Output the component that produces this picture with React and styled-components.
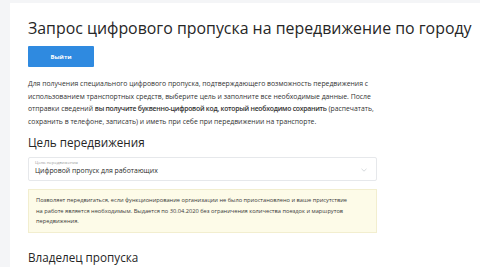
import React from "react";
import styled, { createGlobalStyle } from "styled-components";

const Global = createGlobalStyle`
  html, body { margin: 0; padding: 0; background: #f4f5f7; }
  body { font-family: "Open Sans", "Noto Sans", sans-serif; color: #2b2b2b; overflow: hidden; }
`;

const Page = styled.div`
  padding: 3px 0 0 10px;
  height: 264px;
  overflow: hidden;
`;

const Card = styled.div`
  background: #fff;
  padding: 13px 0 20px 18px;
  min-height: 300px;
`;

const Title = styled.h1`
  margin: 0;
  font-size: 15.9px;
  font-weight: 500;
  line-height: 24px;
  color: #262626;
  white-space: nowrap;
`;

const Button = styled.button`
  display: block;
  margin-top: 6px;
  width: 66px;
  height: 21px;
  border: none;
  border-radius: 1px;
  background: #2f8ae0;
  color: #fff;
  font-family: inherit;
  font-size: 6px;
  font-weight: 700;
  padding: 0;
`;

const Intro = styled.p`
  margin: 11px 0 0;
  font-size: 6.85px;
  line-height: 12.5px;
  color: #333;
  white-space: nowrap;
  b { font-weight: 600; letter-spacing: -0.25px; }
`;

const SectionTitle = styled.h2`
  margin: ${(p) => p.$top}px 0 0;
  font-size: 11.7px;
  font-weight: 500;
  line-height: 18px;
  color: #262626;
`;

const Select = styled.div`
  margin-top: 6px;
  width: 349px;
  height: 24px;
  box-sizing: border-box;
  border: 1px solid #e6e8eb;
  border-radius: 2px;
  padding: 1px 9px 0 6px;
  display: flex;
  align-items: flex-start;
  justify-content: space-between;
`;

const SelectText = styled.div`
  display: flex;
  flex-direction: column;
`;

const SelectLabel = styled.span`
  font-size: 4.3px;
  line-height: 6px;
  color: #9a9a9a;
`;

const SelectValue = styled.span`
  font-size: 6.9px;
  line-height: 11px;
  color: #2b2b2b;
`;

const ChevronBox = styled.span`
  align-self: center;
  display: flex;
`;

const Note = styled.div`
  margin-top: 8px;
  width: 349px;
  box-sizing: border-box;
  background: #fdfbe8;
  border: 1px solid #f2eecf;
  padding: 5px 8px 5px 7px;
  font-size: 5.7px;
  line-height: 10.5px;
  color: #3a3a3a;
  white-space: nowrap;
`;

const Chevron = () => (
  <svg width="6" height="4" viewBox="0 0 6 4">
    <path d="M0.5 0.8 L3 3.2 L5.5 0.8" fill="none" stroke="#c4c8cd" strokeWidth="0.7" />
  </svg>
);

export default function App() {
  return (
    <>
      <Global />
      <Page>
        <Card>
          <Title>Запрос цифрового пропуска на передвижение по городу</Title>
          <Button>Выйти</Button>
          <Intro>
            Для получения специального цифрового пропуска, подтверждающего возможность передвижения с
            <br />
            использованием транспортных средств, выберите цель и заполните все необходимые данные. После
            <br />
            отправки сведений <b>вы получите буквенно-цифровой код, который необходимо сохранить</b> (распечатать,
            <br />
            сохранить в телефоне, записать) и иметь при себе при передвижении на транспорте.
          </Intro>
          <SectionTitle $top={5}>Цель передвижения</SectionTitle>
          <Select>
            <SelectText>
              <SelectLabel>Цель передвижения</SelectLabel>
              <SelectValue>Цифровой пропуск для работающих</SelectValue>
            </SelectText>
            <ChevronBox>
              <Chevron />
            </ChevronBox>
          </Select>
          <Note>
            Позволяет передвигаться, если функционирование организации не было приостановлено и ваше присутствие
            <br />
            на работе является необходимым. Выдается по 30.04.2020 без ограничения количества поездок и маршрутов
            <br />
            передвижения.
          </Note>
          <SectionTitle $top={15}>Владелец пропуска</SectionTitle>
        </Card>
      </Page>
    </>
  );
}
